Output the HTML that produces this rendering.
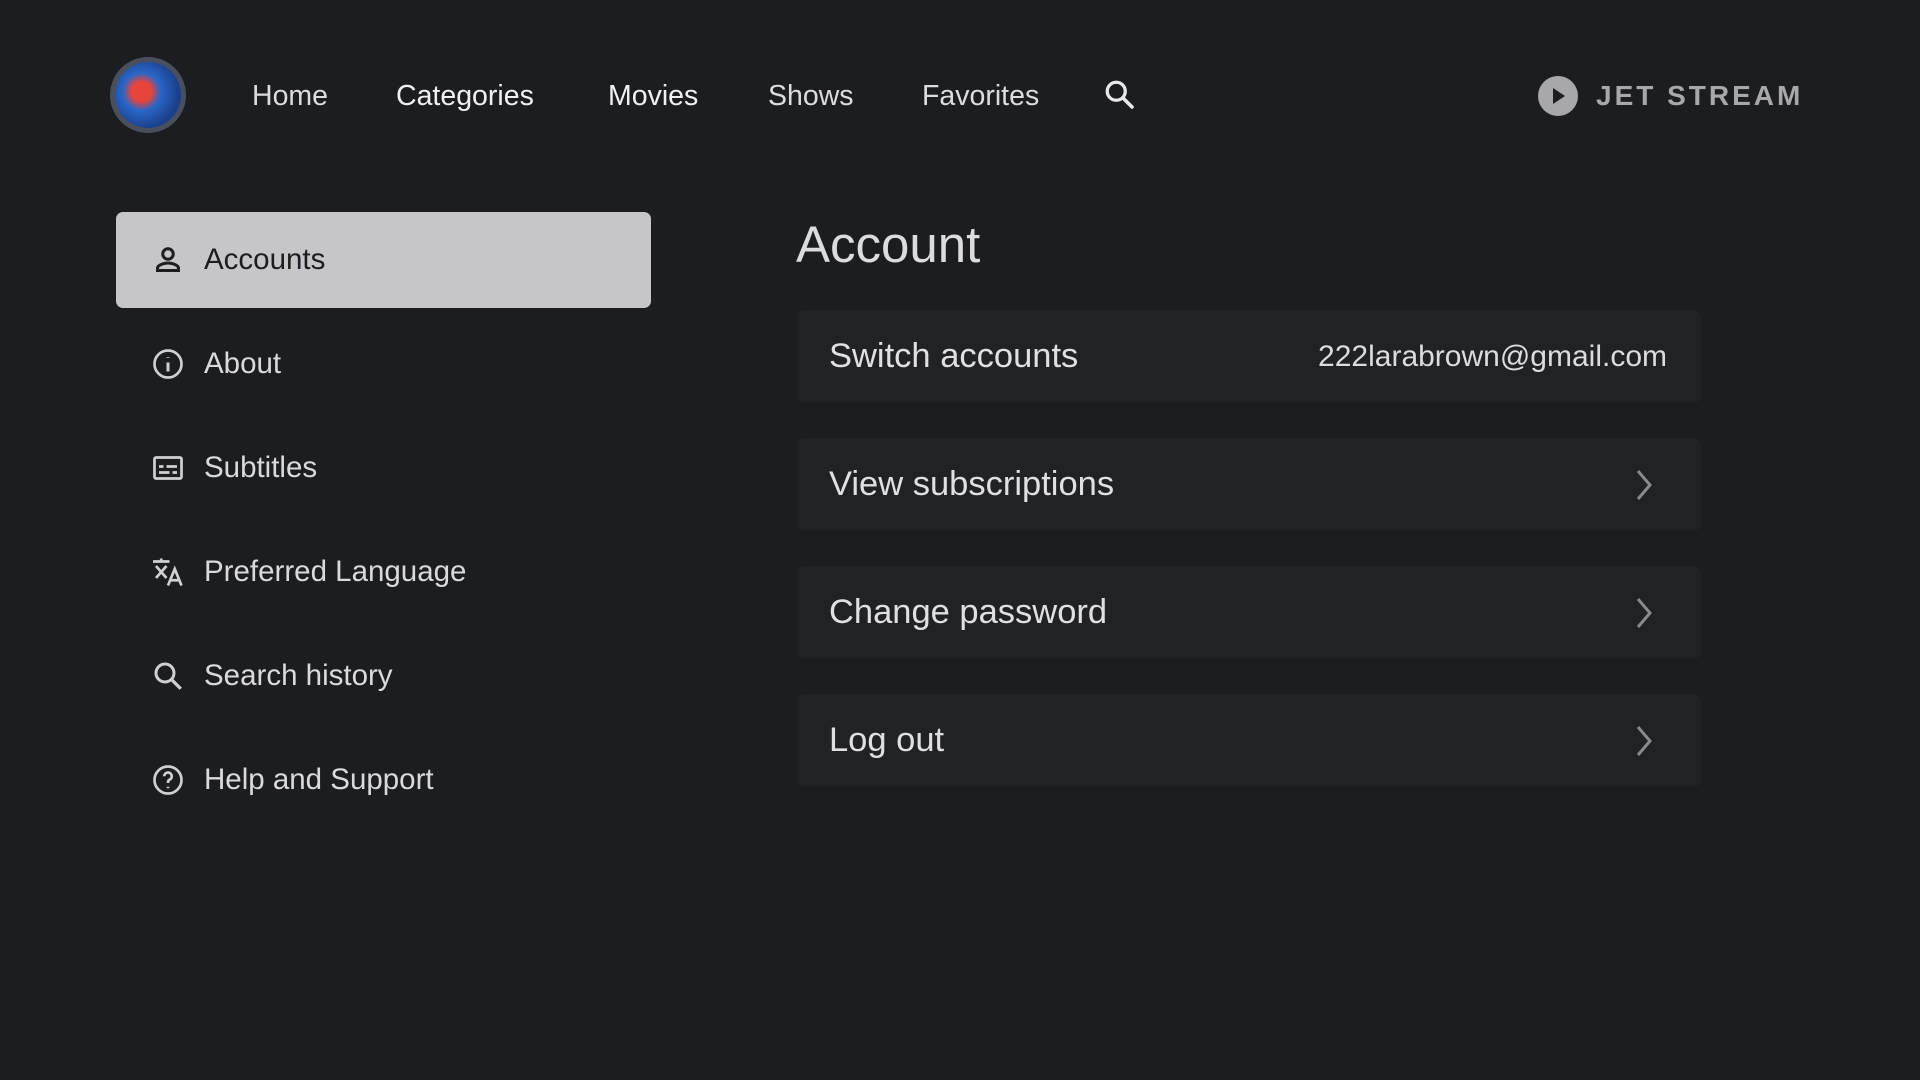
<!DOCTYPE html>
<html><head><meta charset="utf-8"><style>
*{margin:0;padding:0;box-sizing:border-box}
body{width:1920px;height:1080px;background:#1c1d20;font-family:"Liberation Sans",sans-serif;color:#e2e2e6;position:relative;overflow:hidden}
.abs{position:absolute}
.nav{top:79px;font-size:28.5px;color:#dcdce0;line-height:34px}
.side{left:116px;width:535px;height:96px;border-radius:7px}
.side .ic{position:absolute;left:34px;top:30px;width:36px;height:36px}
.side .t{position:absolute;left:88px;top:0;line-height:96px;font-size:29.5px;color:#dadade}
.card{left:797px;width:904px;height:93px;background:#212226;border-radius:8px}
.card .t{position:absolute;left:32px;line-height:93px;font-size:34.5px;color:#e0e0e4}
.chev{position:absolute;right:45px;top:30px}
</style></head><body>
<div class="abs" style="left:110px;top:57px;width:76px;height:76px;border-radius:50%;background:#4a4f5e;">
 <div style="position:absolute;left:5px;top:5px;width:66px;height:66px;border-radius:50%;background:radial-gradient(circle at 40% 45%,#e8443a 0 18%,#2a66c8 35%,#1b3f8a 70%);"></div>
</div>
<div class="abs nav" style="left:252px">Home</div>
<div class="abs nav" style="left:396px;color:#f0f0f2">Categories</div>
<div class="abs nav" style="left:608px;color:#f0f0f2">Movies</div>
<div class="abs nav" style="left:768px">Shows</div>
<div class="abs nav" style="left:922px">Favorites</div>
<svg class="abs" style="left:1102px;top:77px" width="36" height="36" viewBox="0 0 24 24"><circle cx="9.5" cy="9.5" r="6" fill="none" stroke="#e8e8ec" stroke-width="2.2"/><path d="M14 14l6 6" stroke="#e8e8ec" stroke-width="2.4" stroke-linecap="round"/></svg>
<svg class="abs" style="left:1538px;top:76px" width="40" height="40" viewBox="0 0 40 40"><circle cx="20" cy="20" r="20" fill="#a8a8ac"/><path d="M15 12v16l12-8z" fill="#1c1d20"/></svg>
<div class="abs" style="left:1596px;top:80px;font-size:28px;font-weight:bold;letter-spacing:3px;color:#a8a8ac;line-height:32px">JET STREAM</div>

<div class="abs side" style="top:212px;background:#c6c5ca">
 <svg class="ic" viewBox="0 0 24 24"><circle cx="12" cy="8" r="3.5" fill="none" stroke="#1c1d20" stroke-width="2"/><path d="M5 19v-1.5c0-2 4-3.5 7-3.5s7 1.5 7 3.5V19z" fill="none" stroke="#1c1d20" stroke-width="2"/></svg>
 <div class="t" style="color:#1c1d20">Accounts</div>
</div>
<div class="abs side" style="top:316px">
 <svg class="ic" viewBox="0 0 24 24"><circle cx="12" cy="12" r="9" fill="none" stroke="#d0d0d4" stroke-width="1.8"/><path d="M12 11v6M12 7.5v.5" stroke="#d0d0d4" stroke-width="2"/></svg>
 <div class="t">About</div>
</div>
<div class="abs side" style="top:420px">
 <svg class="ic" viewBox="0 0 24 24"><rect x="3" y="5" width="18" height="14" rx="1" fill="none" stroke="#d0d0d4" stroke-width="1.8"/><path d="M6 11h3M11 11h7M6 15h7M15 15h3" stroke="#d0d0d4" stroke-width="1.8"/></svg>
 <div class="t">Subtitles</div>
</div>
<div class="abs side" style="top:524px">
 <svg class="ic" viewBox="0 0 24 24"><path d="M2 5h11M7.5 3v2M4 8l7 8M11 8l-7 8M12 21l4.5-11 4.5 11M13.5 17.5h6" fill="none" stroke="#d0d0d4" stroke-width="1.8"/></svg>
 <div class="t">Preferred Language</div>
</div>
<div class="abs side" style="top:628px">
 <svg class="ic" viewBox="0 0 24 24"><circle cx="10" cy="10" r="6" fill="none" stroke="#d0d0d4" stroke-width="2"/><path d="M14.5 14.5l6 6" stroke="#d0d0d4" stroke-width="2.2"/></svg>
 <div class="t">Search history</div>
</div>
<div class="abs side" style="top:732px">
 <svg class="ic" viewBox="0 0 24 24"><circle cx="12" cy="12" r="9" fill="none" stroke="#d0d0d4" stroke-width="1.8"/><path d="M9.5 9.5a2.5 2.5 0 1 1 3.5 2.3c-.7.4-1 .9-1 1.7v.5M12 16.5v1" fill="none" stroke="#d0d0d4" stroke-width="1.8"/></svg>
 <div class="t">Help and Support</div>
</div>

<div class="abs" style="left:796px;top:216px;font-size:51px;line-height:58px;color:#dcdce0">Account</div>
<div class="abs card" style="top:310px"><div class="t">Switch accounts</div><div style="position:absolute;right:34px;line-height:93px;font-size:30px;color:#dcdce0">222larabrown@gmail.com</div></div>
<div class="abs card" style="top:438px"><div class="t">View subscriptions</div><svg class="chev" width="24" height="34" viewBox="0 0 24 34"><path d="M6 3l12 14-12 14" fill="none" stroke="#8a8a8e" stroke-width="3"/></svg></div>
<div class="abs card" style="top:566px"><div class="t">Change password</div><svg class="chev" width="24" height="34" viewBox="0 0 24 34"><path d="M6 3l12 14-12 14" fill="none" stroke="#8a8a8e" stroke-width="3"/></svg></div>
<div class="abs card" style="top:694px"><div class="t">Log out</div><svg class="chev" width="24" height="34" viewBox="0 0 24 34"><path d="M6 3l12 14-12 14" fill="none" stroke="#8a8a8e" stroke-width="3"/></svg></div>
</body></html>
